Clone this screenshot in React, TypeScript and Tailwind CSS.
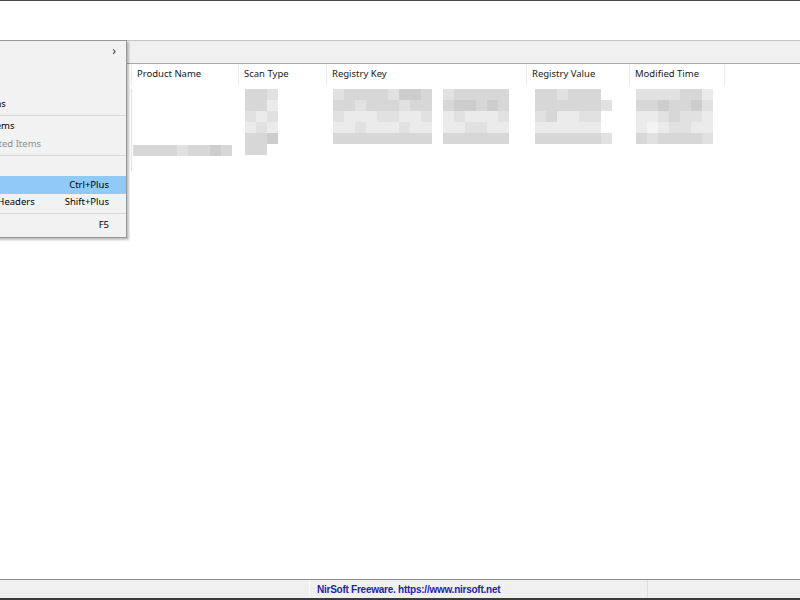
import type { ReactNode } from "react";

type MenuEntry =
  | { kind: "item"; label: string; shortcut?: string; submenu?: boolean; disabled?: boolean; active?: boolean }
  | { kind: "sep" };

const menuEntries: MenuEntry[] = [
  { kind: "item", label: "Open In RegEdit", submenu: true },
  { kind: "item", label: "Save Selected Items" },
  { kind: "item", label: "Copy Selected Items" },
  { kind: "item", label: "Delete Selected Items" },
  { kind: "sep" },
  { kind: "item", label: "HTML Report - All Items" },
  { kind: "item", label: "HTML Report - Selected Items", disabled: true },
  { kind: "sep" },
  { kind: "item", label: "Choose Columns" },
  { kind: "item", label: "Auto Size Columns", shortcut: "Ctrl+Plus", active: true },
  { kind: "item", label: "Auto Size Columns+Headers", shortcut: "Shift+Plus" },
  { kind: "sep" },
  { kind: "item", label: "Refresh", shortcut: "F5" },
];

const columns = [
  { name: "", width: "w-[132px]" },
  { name: "Product Name", width: "w-[107px]" },
  { name: "Scan Type", width: "w-[88px]" },
  { name: "Registry Key", width: "w-[200px]" },
  { name: "Registry Value", width: "w-[103px]" },
  { name: "Modified Time", width: "w-[95px]" },
];

// shade codes for the pixelated (censored) cell values
const shades: Record<string, string> = {
  a: "bg-[#cdcdcd]",
  b: "bg-[#d7d7d7]",
  c: "bg-[#e1e1e1]",
  d: "bg-[#ebebeb]",
  e: "bg-[#f3f3f3]",
  ".": "bg-transparent",
};

function Mosaic({ rows }: { rows: string[] }) {
  return (
    <div className="flex flex-col blur-[0.7px]">
      {rows.map((row, r) => (
        <div key={r} className="flex">
          {row.split("").map((ch, c) => (
            <div key={c} className={`h-[11px] w-[11px] ${shades[ch]}`} />
          ))}
        </div>
      ))}
    </div>
  );
}

function MenuRow({ entry }: { entry: MenuEntry }) {
  if (entry.kind === "sep") {
    return (
      <div className="flex h-[5px] items-center">
        <div className="h-px w-full bg-[#d7d7d7]" />
      </div>
    );
  }
  return (
    <div
      className={
        entry.active
          ? "flex h-[17.7px] items-center bg-[#91c9f7] pr-[17px]"
          : "flex h-[17.7px] items-center pr-[17px]"
      }
    >
      <span
        className={
          entry.disabled
            ? "flex-1 whitespace-nowrap pl-[30px] text-[#8d8d8d]"
            : "flex-1 whitespace-nowrap pl-[30px] text-black"
        }
      >
        {entry.label}
      </span>
      {entry.shortcut && <span className="text-black">{entry.shortcut}</span>}
      {entry.submenu && <span className="-mr-[7px] text-[12px] leading-none text-[#333]">›</span>}
    </div>
  );
}

function Frame({ children }: { children: ReactNode }) {
  return (
    <div
      className="relative flex h-[600px] w-[800px] flex-col overflow-hidden bg-white text-[9.5px]"
      style={{ fontFamily: '"Noto Sans", "Open Sans", sans-serif' }}
    >
      {children}
    </div>
  );
}

export default function App() {
  return (
    <Frame>
      <div className="h-px bg-[#4a4a4a]" />
      <div className="h-[39px]" />

      {/* toolbar strip */}
      <div className="h-[24px] border-t border-b border-t-[#c6c6c6] border-b-[#a9a9a9] bg-[#f0f0f0]" />

      {/* list view */}
      <div className="flex-1">
        <div className="flex h-[21px] items-center">
          {columns.map((col, i) => (
            <div
              key={i}
              className={`${col.width} flex h-full items-center border-r border-[#ececec] pl-[5px] text-[#1a1a1a]`}
            >
              {col.name}
            </div>
          ))}
        </div>

        <div className="flex pt-[4px]">
          <div className="w-[131px]" />
          <div className="flex h-[82px] w-[108px] flex-col border-l border-[#e4e4e4] pl-[1px]">
            <div className="h-[56px]" />
            <Mosaic rows={["bbbbcbbab"]} />
          </div>
          <div className="w-[88px] pl-[6px]">
            <Mosaic rows={["bbc", "bbd", "cdc", "dcd", "bba", "bb."]} />
          </div>
          <div className="flex w-[200px] pl-[6px]">
            <Mosaic rows={["cbbbbcaab", "bbcbbbcbb", "cdddccddc", "ddcdddcdd", "bbbbbbbbb"]} />
            <div className="w-[11px]" />
            <Mosaic rows={["cbbbbb", "baabab", "dcdddc", "ddccdd", "bbbbbb"]} />
          </div>
          <div className="w-[103px] pl-[8px]">
            <Mosaic rows={["bbcbbb.", "bbbbbbc", "cbddcc.", "dddddd.", "bbbbbbc"]} />
          </div>
          <div className="w-[95px] pl-[6px]">
            <Mosaic rows={["ccccbbd", "bbabbac", "ddcbccd", "dedccdd", "bcbbbbc"]} />
          </div>
        </div>
      </div>

      {/* status bar */}
      <div className="flex h-[21px] border-t border-b-2 border-t-[#8c8c8c] border-b-[#3a3a3a] bg-[#f0f0f0]">
        <div className="w-[310px] border-r border-[#fafafa]" />
        <div
          className="flex w-[338px] items-center border-r border-[#dedede] pl-[7px] text-[10px] font-bold tracking-[-0.25px] text-[#2424a8]"
          style={{ fontFamily: '"Liberation Sans", Arial, sans-serif' }}
        >
          NirSoft Freeware. https://www.nirsoft.net
        </div>
        <div className="flex-1" />
      </div>

      {/* context menu, opened at the left edge of the window */}
      <div className="absolute left-[-122px] top-[40px] w-[249px] border border-[#979797] bg-[#f2f2f2] pt-px pb-[3px] shadow-[2px_2px_2px_rgba(0,0,0,0.25)]">
        {menuEntries.map((entry, i) => (
          <MenuRow key={i} entry={entry} />
        ))}
      </div>
    </Frame>
  );
}
